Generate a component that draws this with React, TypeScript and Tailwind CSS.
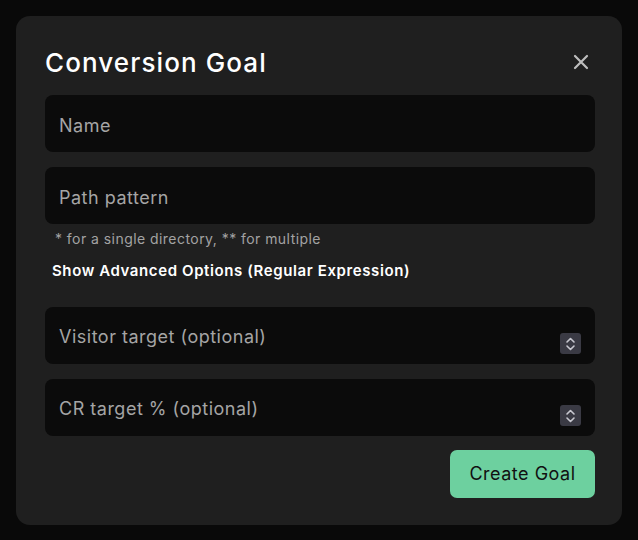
import React from "react";

function Spinner() {
  return (
    <div className="flex h-[21px] w-[21px] flex-col items-center justify-center rounded-[3px] bg-[#3a3a44]">
      <svg width="11" height="16" viewBox="0 0 11 16" fill="none" stroke="#c8c8d0" strokeWidth="1.6" strokeLinecap="round" strokeLinejoin="round">
        <path d="M2 6 L5.5 2.5 L9 6" />
        <path d="M2 10 L5.5 13.5 L9 10" />
      </svg>
    </div>
  );
}

function Field({ label, spinner }: { label: string; spinner?: boolean }) {
  return (
    <div className="flex h-[57px] w-full items-center justify-between rounded-[8px] bg-[#0b0b0b] pl-[14px] pr-[14px]">
      <span className="pt-[3px] text-[18px] tracking-[0.5px] text-[#a5a5a5]">{label}</span>
      {spinner && (
        <div className="mt-[17px]">
          <Spinner />
        </div>
      )}
    </div>
  );
}

export default function App() {
  return (
    <div
      className="flex h-[540px] w-[638px] items-start justify-center bg-[#090909] pt-[16px]"
      style={{ fontFamily: "Inter, 'Noto Sans', sans-serif" }}
    >
      <div className="flex h-[509px] w-[606px] flex-col rounded-[14px] bg-[#1f1f1f] pl-[29px] pr-[27px] pt-[28px]">
        <div className="flex h-[36px] items-center justify-between">
          <h1 className="text-[26px] font-medium tracking-[1.1px] text-white">Conversion Goal</h1>
          <svg width="16" height="16" viewBox="0 0 16 16" className="mr-[6px]" stroke="#bdbdbd" strokeWidth="2.2" strokeLinecap="round">
            <path d="M2 2 L14 14 M14 2 L2 14" />
          </svg>
        </div>
        <div className="mt-[15px] flex flex-col gap-[15px]">
          <Field label="Name" />
          <Field label="Path pattern" />
        </div>
        <p className="mt-[4px] pl-[10px] text-[14px] tracking-[0.45px] text-[#a3a3a3]">* for a single directory, ** for multiple</p>
        <p className="mt-[11px] pl-[7px] text-[15px] font-semibold tracking-[0.6px] text-white">Show Advanced Options (Regular Expression)</p>
        <div className="mt-[24px] flex flex-col gap-[15px]">
          <Field label="Visitor target (optional)" spinner />
          <Field label="CR target % (optional)" spinner />
        </div>
        <div className="mt-[14px] flex justify-end">
          <button className="h-[48px] w-[145px] rounded-[7px] bg-[#6dd09f] text-[18px] tracking-[0.5px] text-[#111]">Create Goal</button>
        </div>
      </div>
    </div>
  );
}
